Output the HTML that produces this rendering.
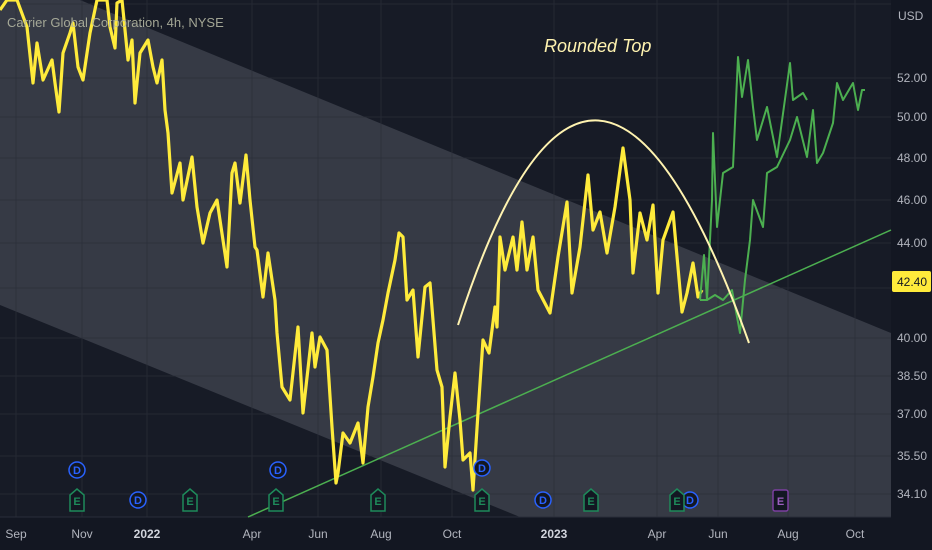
<!DOCTYPE html>
<html><head><meta charset="utf-8"><style>
html,body{margin:0;padding:0;background:#131722;}
svg{display:block}
</style></head><body>
<svg width="932" height="550" viewBox="0 0 932 550" xmlns="http://www.w3.org/2000/svg" font-family="Liberation Sans, sans-serif">
<rect width="932" height="550" fill="#171b26"/>
<rect x="891" y="0" width="41" height="550" fill="#131722"/>
<rect x="0" y="517" width="932" height="33" fill="#131722"/>
<polygon points="80,0 891,333 891,517 520,517 0,305 0,0" fill="#363a45"/>
<g stroke="#2a2e39" stroke-width="1" opacity="0.7">
<line x1="0" y1="4" x2="891" y2="4"/><line x1="0" y1="78" x2="891" y2="78"/><line x1="0" y1="117" x2="891" y2="117"/><line x1="0" y1="158" x2="891" y2="158"/><line x1="0" y1="200" x2="891" y2="200"/><line x1="0" y1="243" x2="891" y2="243"/><line x1="0" y1="288" x2="891" y2="288"/><line x1="0" y1="338" x2="891" y2="338"/><line x1="0" y1="376" x2="891" y2="376"/><line x1="0" y1="414" x2="891" y2="414"/><line x1="0" y1="456" x2="891" y2="456"/><line x1="0" y1="494" x2="891" y2="494"/>
<line x1="16" y1="0" x2="16" y2="517"/><line x1="82" y1="0" x2="82" y2="517"/><line x1="147" y1="0" x2="147" y2="517"/><line x1="252" y1="0" x2="252" y2="517"/><line x1="318" y1="0" x2="318" y2="517"/><line x1="381" y1="0" x2="381" y2="517"/><line x1="452" y1="0" x2="452" y2="517"/><line x1="554" y1="0" x2="554" y2="517"/><line x1="657" y1="0" x2="657" y2="517"/><line x1="718" y1="0" x2="718" y2="517"/><line x1="788" y1="0" x2="788" y2="517"/><line x1="855" y1="0" x2="855" y2="517"/>
</g>
<line x1="0" y1="517" x2="891" y2="517" stroke="#2a2e39"/>
<line x1="248" y1="517" x2="891" y2="230" stroke="#4caf50" stroke-width="1.5"/>
<polyline fill="none" stroke="#ffeb3b" stroke-width="3.2" stroke-linejoin="round" points="0,10 7,0 17,0 27,27 33,83 37,43 43,80 52,60 55,83 59,112 63,53 70,33 73,23 78,67 83,80 90,33 97,0 107,0 110,27 115,48 117,3 122,0 128,60 132,40 135,103 140,53 148,40 153,67 157,83 162,60 165,110 168,133 172,193 180,163 183,200 192,157 197,207 203,243 210,213 217,200 227,267 232,173 235,163 240,203 246,155 250,200 255,247 257,250 263,297 268,253 275,300 277,333 282,387 290,400 298,327 303,413 312,333 315,367 320,337 327,350 332,427 336,483 338,473 343,433 350,443 358,423 363,463 368,407 373,377 378,343 383,320 388,293 395,260 399,233 403,237 407,300 413,290 418,357 425,287 430,283 437,370 442,387 445,467 450,417 455,373 460,420 463,460 470,453 473,490 478,413 483,340 489,353 495,307 497,327 500,237 505,270 513,237 517,270 522,222 527,270 533,237 538,290 550,313 558,257 567,202 572,293 580,247 588,175 593,230 600,212 607,253 615,207 623,148 630,200 633,273 640,213 647,240 653,205 658,293 663,240 673,212 682,312 687,293 693,263 698,297 702,290"/>
<polyline fill="none" stroke="#4caf50" stroke-width="2" stroke-linejoin="round" points="700,300 704,255 707,300 712,200 713,133 717,227 723,173 733,167 738,57 742,97 748,60 753,107 757,140 767,107 777,157 790,63 793,100 803,93 807,100"/>
<polyline fill="none" stroke="#4caf50" stroke-width="2" stroke-linejoin="round" points="700,300 707,300 715,295 723,300 732,290 740,333 745,280 750,240 753,200 763,227 767,173 777,167 790,140 797,117 807,157 813,110 817,163 823,153 833,123 837,83 843,100 853,83 858,110 862,90 865,90"/>
<path d="M458,325 Q593,-93 749,343" fill="none" stroke="#fff3b0" stroke-width="2"/>
<text x="544" y="52" fill="#fff3b0" font-size="18" font-style="italic">Rounded Top</text>
<text x="7" y="27" fill="#b2b5a0" font-size="13" opacity="0.9">Carrier Global Corporation, 4h, NYSE</text>
<g font-size="11" font-weight="bold" text-anchor="middle">
<g fill="#131722" stroke="#2962ff" stroke-width="1.5">
<circle cx="77" cy="470" r="8"/><circle cx="278" cy="470" r="8"/><circle cx="482" cy="468" r="8"/>
<circle cx="138" cy="500" r="8"/><circle cx="543" cy="500" r="8"/><circle cx="690" cy="500" r="8"/>
</g>
<g fill="#2962ff"><text x="77" y="474">D</text><text x="278" y="474">D</text><text x="482" y="472">D</text><text x="138" y="504">D</text><text x="543" y="504">D</text><text x="690" y="504">D</text></g>
<g fill="#131722" stroke="#1e8a5a" stroke-width="1.5">
<path d="M70,511 V495 L77,489 L84,495 V511 Z"/><path d="M183,511 V495 L190,489 L197,495 V511 Z"/><path d="M269,511 V495 L276,489 L283,495 V511 Z"/><path d="M371,511 V495 L378,489 L385,495 V511 Z"/><path d="M475,511 V495 L482,489 L489,495 V511 Z"/><path d="M584,511 V495 L591,489 L598,495 V511 Z"/><path d="M670,511 V495 L677,489 L684,495 V511 Z"/>
</g>
<g fill="#1e8a5a"><text x="77" y="505">E</text><text x="190" y="505">E</text><text x="276" y="505">E</text><text x="378" y="505">E</text><text x="482" y="505">E</text><text x="591" y="505">E</text><text x="677" y="505">E</text></g>
<rect x="773" y="490" width="15" height="21" rx="2" fill="#131722" stroke="#7b3fa0" stroke-width="1.5"/>
<text x="780.5" y="505" fill="#9c5fc0">E</text>
</g>
<g fill="#b2b5be" font-size="12">
<text x="898" y="20">USD</text>
<text x="897" y="82">52.00</text><text x="897" y="121">50.00</text><text x="897" y="162">48.00</text><text x="897" y="204">46.00</text><text x="897" y="247">44.00</text><text x="897" y="292">42.00</text><text x="897" y="342">40.00</text><text x="897" y="380">38.50</text><text x="897" y="418">37.00</text><text x="897" y="460">35.50</text><text x="897" y="498">34.10</text>
</g>
<rect x="892" y="271" width="39" height="21" rx="2" fill="#ffeb3b"/>
<text x="897" y="286" fill="#131722" font-size="12">42.40</text>
<g fill="#b2b5be" font-size="12" text-anchor="middle">
<text x="16" y="538">Sep</text><text x="82" y="538">Nov</text><text x="147" y="538" font-weight="bold" fill="#d1d4dc">2022</text><text x="252" y="538">Apr</text><text x="318" y="538">Jun</text><text x="381" y="538">Aug</text><text x="452" y="538">Oct</text><text x="554" y="538" font-weight="bold" fill="#d1d4dc">2023</text><text x="657" y="538">Apr</text><text x="718" y="538">Jun</text><text x="788" y="538">Aug</text><text x="855" y="538">Oct</text>
</g>
</svg>
</body></html>
